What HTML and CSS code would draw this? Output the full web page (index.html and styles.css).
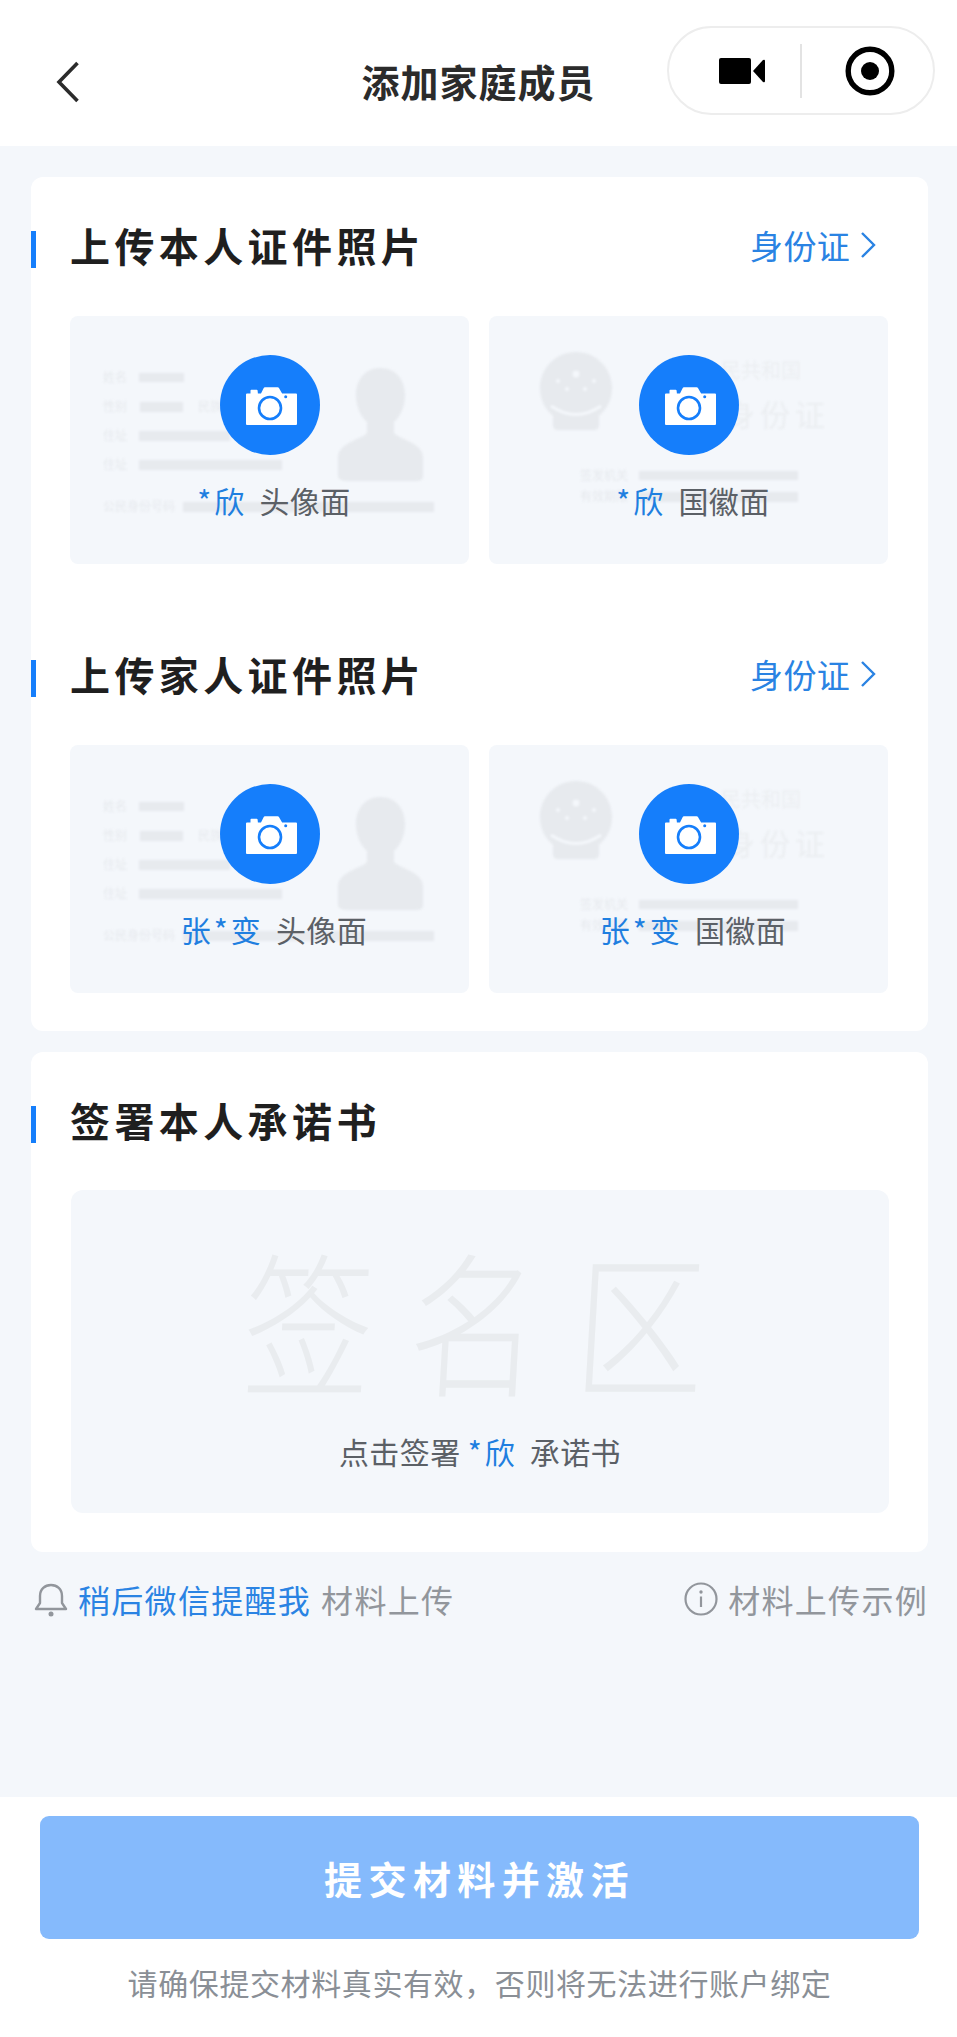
FILE: index.html
```html
<!DOCTYPE html>
<html lang="zh-CN">
<head>
<meta charset="utf-8">
<title>添加家庭成员</title>
<link rel="stylesheet" href="styles.css">
</head>
<body>
<svg class="defs" width="0" height="0" aria-hidden="true">
  <defs>
    <symbol id="camera" viewBox="0 0 100 100">
      <path fill="#fff" d="M27 38.500h3.500v-3q0-.8.8-.8h5.400q.8 0 .9.8l.3 3H41l2.600-5.300q.4-.9 1.400-.9h12.600q1 0 1.500.9l3 5.300h13.900q1 0 1 1V69q0 1-1 1H27q-1 0-1-1V39.500q0-1 1-1z"/>
      <circle cx="50" cy="53" r="11" fill="#fff" stroke="#157efb" stroke-width="2.600"/>
      <circle cx="65.700" cy="41.700" r="1.500" fill="#157efb"/>
    </symbol>
    <symbol id="front" viewBox="0 0 399 248">
      <g fill="#e7eaee">
        <rect x="69" y="57" width="45" height="9"/>
        <rect x="70" y="86" width="43" height="10"/>
        <rect x="69" y="115" width="91" height="10"/>
        <rect x="69" y="144" width="143" height="10"/>
        <rect x="113" y="186" width="251" height="10"/>
        <path d="M310 52c15 0 25 11 25 27 0 12-5 22-11 27v10c0 6 29 10 29 25v19q0 5-6 5h-69q-10 0-10-5v-19c0-15 29-19 29-25v-10c-6-5-11-15-11-27 0-16 10-27 24-27z"/>
      </g>
      <g class="tiny">
        <text x="33" y="66">姓名</text>
        <text x="33" y="95">性别</text>
        <text x="128" y="95">民族</text>
        <text x="33" y="124">住址</text>
        <text x="33" y="153">住址</text>
        <text x="33" y="195">公民身份号码</text>
      </g>
    </symbol>
    <symbol id="back" viewBox="0 0 399 248">
      <g fill="#e7eaee">
        <rect x="150" y="155" width="159" height="9"/>
        <rect x="150" y="176" width="159" height="10"/>
        <path d="M87 36c20 0 36 16 36 36 0 12-5 21-13 28v9q0 5-5 5H69q-5 0-5-5v-9c-8-7-13-16-13-28 0-20 16-36 36-36z"/>
      </g>
      <path d="M62 90q25 17 50 0" fill="none" stroke="#f4f7fb" stroke-width="3"/>
      <g fill="#f4f7fb">
        <circle cx="87" cy="58" r="3.500"/><circle cx="69" cy="65" r="2"/><circle cx="105" cy="65" r="2"/><circle cx="78" cy="73" r="2"/><circle cx="96" cy="73" r="2"/>
      </g>
      <g class="tiny">
        <text x="91" y="164">签发机关</text>
        <text x="91" y="185">有效期限</text>
      </g>
      <text class="idsub" x="212" y="62">人民共和国</text>
      <text class="idhead" x="236" y="110">身份证</text>
    </symbol>
  </defs>
</svg>

<header class="nav">
  <svg class="back" width="24" height="42" viewBox="0 0 24 42"><path d="M21.500 2 3 21l18.500 19" fill="none" stroke="#2b2b2b" stroke-width="3.600"/></svg>
  <h1 class="title">添加家庭成员</h1>
  <div class="capsule">
    <svg class="capsule-icon" width="46" height="26" viewBox="0 0 46 26"><rect width="32" height="26" rx="2" fill="#000"/><path d="M34 13 44 2q2-1 2 1v20q0 2-2 1z" fill="#000"/></svg>
    <span class="capsule-line"></span>
    <svg class="capsule-icon" width="50" height="50" viewBox="0 0 50 50"><circle cx="25" cy="25" r="21.800" fill="none" stroke="#000" stroke-width="5.400"/><circle cx="25" cy="25" r="9" fill="#000"/></svg>
  </div>
</header>

<main class="content">
  <section class="card">
    <div class="head">
      <h2 class="head-title">上传本人证件照片</h2>
      <a class="head-link">身份证<svg class="chev" width="16" height="26" viewBox="0 0 16 26"><path d="m2 1 12 12L2 25" fill="none" stroke="#2a83e3" stroke-width="2.400"/></svg></a>
    </div>
    <div class="tiles">
      <div class="tile">
        <svg class="tile-bg"><use href="#front"/></svg>
        <span class="shot"><svg width="100" height="100"><use href="#camera"/></svg></span>
        <p class="tile-label tile-label-shift"><b class="name">*欣</b> 头像面</p>
      </div>
      <div class="tile">
        <svg class="tile-bg"><use href="#back"/></svg>
        <span class="shot"><svg width="100" height="100"><use href="#camera"/></svg></span>
        <p class="tile-label tile-label-shift"><b class="name">*欣</b> 国徽面</p>
      </div>
    </div>
    <div class="head head-next">
      <h2 class="head-title">上传家人证件照片</h2>
      <a class="head-link">身份证<svg class="chev" width="16" height="26" viewBox="0 0 16 26"><path d="m2 1 12 12L2 25" fill="none" stroke="#2a83e3" stroke-width="2.400"/></svg></a>
    </div>
    <div class="tiles">
      <div class="tile">
        <svg class="tile-bg"><use href="#front"/></svg>
        <span class="shot"><svg width="100" height="100"><use href="#camera"/></svg></span>
        <p class="tile-label tile-label-shift"><b class="name">张*变</b> 头像面</p>
      </div>
      <div class="tile">
        <svg class="tile-bg"><use href="#back"/></svg>
        <span class="shot"><svg width="100" height="100"><use href="#camera"/></svg></span>
        <p class="tile-label tile-label-shift"><b class="name">张*变</b> 国徽面</p>
      </div>
    </div>
  </section>

  <section class="card card-sign">
    <div class="head">
      <h2 class="head-title">签署本人承诺书</h2>
    </div>
    <div class="sign">
      <div class="sign-mark">签名区</div>
      <p class="tile-label">点击签署 <b class="name">*欣</b> 承诺书</p>
    </div>
  </section>

  <div class="hints">
    <div class="hint">
      <svg width="34" height="35" viewBox="0 0 34 35"><path d="M2 27h30l-4-6V14C28 7 23 3 17 3S6 7 6 14v7z" fill="none" stroke="#92969c" stroke-width="2.400" stroke-linejoin="round"/><circle cx="17" cy="32" r="2.500" fill="#92969c"/></svg>
      <span class="hint-link">稍后微信提醒我</span>
      <span>材料上传</span>
    </div>
    <div class="hint">
      <svg width="34" height="34" viewBox="0 0 34 34"><circle cx="17" cy="17" r="15.500" fill="none" stroke="#92969c" stroke-width="2.200"/><circle cx="17" cy="10" r="1.700" fill="#92969c"/><path d="M17 14.500V25" stroke="#92969c" stroke-width="2.200"/></svg>
      <span>材料上传示例</span>
    </div>
  </div>
</main>

<footer class="foot">
  <button class="submit" type="button">提交材料并激活</button>
  <p class="foot-note">请确保提交材料真实有效，否则将无法进行账户绑定</p>
</footer>
</body>
</html>
```

FILE: styles.css
```css
* { box-sizing: border-box; }
html, body { margin: 0; padding: 0; }
body {
  width: 957px;
  height: 2037px;
  display: flex;
  flex-direction: column;
  background: #f4f7fb;
  color: #5b6066;
  font-family: "Noto Sans CJK SC", "Noto Sans", sans-serif;
  overflow: hidden;
}
p, h1, h2 { margin: 0; }
.defs { position: absolute; }

.nav {
  height: 146px;
  flex: none;
  background: #fff;
  display: grid;
  grid-template-columns: 1fr auto 1fr;
  align-items: start;
}
.back { margin: 61px 0 0 56px; }
.title {
  margin-top: 55px;
  font-size: 38px;
  line-height: 52px;
  font-weight: 700;
  color: #2b2b2b;
  letter-spacing: 1px;
}
.capsule {
  justify-self: end;
  margin: 26px 22px 0 0;
  width: 268px;
  height: 89px;
  border: 2px solid #ededed;
  border-radius: 45px;
  display: flex;
  align-items: center;
  padding-left: 50px;
}
.capsule-icon { flex: none; }
.capsule-line {
  width: 2px;
  height: 54px;
  margin: 0 43px 0 35px;
  background: #e3e3e3;
}

.content { flex: 1; padding: 31px 29px 0 31px; }
.card {
  background: #fff;
  border-radius: 12px;
  padding: 40px 0 38px;
  height: 854px;
}
.card-sign { margin-top: 21px; height: 500px; }
.head {
  height: 60px;
  display: flex;
  align-items: center;
  justify-content: space-between;
  padding: 0 52px 4px 39px;
  position: relative;
}
.head::before {
  content: "";
  position: absolute;
  left: 0;
  top: 14px;
  width: 5px;
  height: 37px;
  background: #157efb;
}
.head-next { margin-top: 82px; }
.head-title {
  font-size: 40px;
  line-height: 56px;
  font-weight: 700;
  color: #1f1f1f;
  letter-spacing: 4.400px;
}
.head-link {
  display: flex;
  align-items: center;
  gap: 10px;
  font-size: 33px;
  color: #2a83e3;
  letter-spacing: .3px;
}
.tiles {
  display: grid;
  grid-template-columns: 399px 399px;
  gap: 20px;
  margin: 39px 0 0 39px;
}
.tile {
  position: relative;
  height: 248px;
  background: #f4f7fb;
  border-radius: 8px;
  padding-top: 39px;
  display: flex;
  flex-direction: column;
  align-items: center;
}
.tile-bg {
  position: absolute;
  left: 0;
  top: 0;
  width: 399px;
  height: 248px;
  filter: blur(1px);
}
.tiny { font-size: 12px; fill: #e6e9ed; }
.idsub { font-size: 20px; fill: #ebeef1; }
.idhead { font-size: 30px; fill: #ebeef1; letter-spacing: 5px; }
.shot {
  position: relative;
  width: 100px;
  height: 100px;
  border-radius: 50%;
  background: #157efb;
  flex: none;
}
.shot svg { display: block; }
.tile-label {
  position: relative;
  margin-top: 23px;
  font-size: 30px;
  line-height: 44px;
  color: #5b6066;
  letter-spacing: .4px;
  white-space: pre-wrap;
}
.tile-label-shift { margin-left: 9px; }
.name {
  font-weight: 400;
  color: #1f7fe0;
  letter-spacing: 3px;
  margin-right: 5px;
}

.sign {
  margin: 38px 0 0 40px;
  width: 818px;
  height: 323px;
  background: #f4f7fb;
  border-radius: 12px;
  display: flex;
  flex-direction: column;
  align-items: center;
}
.sign-mark {
  margin-top: 60px;
  font-size: 130px;
  line-height: 150px;
  font-weight: 300;
  color: #e9ecef;
  letter-spacing: 36px;
  margin-right: -36px;
  transform: translate(-5px, -8px) scaleY(1.2) skewX(-4deg);
}
.sign .tile-label { margin-top: 29px; }

.hints {
  margin-top: 25px;
  display: flex;
  justify-content: space-between;
  align-items: center;
  height: 44px;
  padding-left: 3px;
  font-size: 32px;
  line-height: 44px;
  color: #92969c;
  letter-spacing: 1.300px;
}
.hint { display: flex; align-items: center; gap: 10px; }
.hint-link { color: #2a83e3; }

.foot {
  flex: none;
  height: 240px;
  background: #fff;
  padding: 19px 38px 0 40px;
}
.submit {
  display: block;
  width: 879px;
  height: 123px;
  border: 0;
  border-radius: 9px;
  background: #85bafc;
  color: #fff;
  font: 700 38px/1 "Noto Sans CJK SC", "Noto Sans", sans-serif;
  letter-spacing: 6.400px;
}
.foot-note {
  margin-top: 21px;
  text-align: center;
  font-size: 30px;
  line-height: 44px;
  color: #8a8f96;
  letter-spacing: .6px;
}
```
